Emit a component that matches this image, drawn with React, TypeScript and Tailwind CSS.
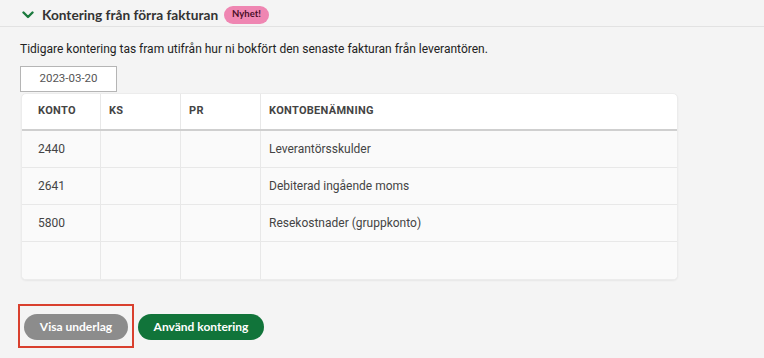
import React from "react";

const rows = [
  { konto: "2440", namn: "Leverantörsskulder" },
  { konto: "2641", namn: "Debiterad ingående moms" },
  { konto: "5800", namn: "Resekostnader (gruppkonto)" },
  { konto: "", namn: "" },
];

export default function App() {
  return (
    <div className="w-[764px] h-[358px] bg-[#f4f4f4] overflow-hidden" style={{ fontFamily: "Roboto, 'Liberation Sans', sans-serif" }}>
      <div className="pl-[20px] border-b border-[#e2e2e2] h-[27px] flex items-center">
        <div className="flex items-center gap-[8px] pt-[3px]">
          <svg width="12" height="8" viewBox="0 0 12 8" className="ml-[2px]">
            <path d="M1.5 1.5 L6 6 L10.5 1.5" fill="none" stroke="#1b7a3e" strokeWidth="2.4" strokeLinecap="round" strokeLinejoin="round" />
          </svg>
          <span className="text-[13.7px] font-bold text-[#333] leading-none" style={{ fontFamily: "Lato, sans-serif" }}>Kontering från förra fakturan</span>
          <span className="ml-[-2px] bg-[#ef86b2] text-[#4a0f28] text-[9.5px] font-bold rounded-full px-[8px] h-[18px] flex items-center" style={{ fontFamily: "Lato, sans-serif" }}>Nyhet!</span>
        </div>
      </div>
      <div className="px-[20px]">
        <p className="mt-[15px] text-[12px] text-[#222] leading-[14px]">Tidigare kontering tas fram utifrån hur ni bokfört den senaste fakturan från leverantören.</p>
        <div className="mt-[10px] w-[97px] h-[26px] bg-white border border-[#b5b5b5] flex items-center justify-center text-[11.5px] text-[#555]">2023-03-20</div>
        <div className="mt-[1px] ml-[1px] w-[657px] bg-white rounded-[5px] border border-[#ececec] shadow-[0_1px_2px_rgba(0,0,0,0.06)] overflow-hidden">
          <div className="flex h-[37px] items-center border-b-2 border-[#cfcfcf] text-[11px] font-bold text-[#444] tracking-[0.3px]">
            <div className="w-[79px] pl-[16px] h-full flex items-center border-r border-[#e8e8e8]">KONTO</div>
            <div className="w-[80px] pl-[8px] h-full flex items-center border-r border-[#e8e8e8]">KS</div>
            <div className="w-[80px] pl-[8px] h-full flex items-center border-r border-[#e8e8e8]">PR</div>
            <div className="flex-1 pl-[8px] h-full flex items-center">KONTOBENÄMNING</div>
          </div>
          {rows.map((r, i) => (
            <div key={i} className={`flex h-[37px] items-center bg-[#fafafa] text-[12px] text-[#444] ${i < rows.length - 1 ? "border-b border-[#e8e8e8]" : ""}`}>
              <div className="w-[79px] pl-[16px] h-full flex items-center border-r border-[#e8e8e8]">{r.konto}</div>
              <div className="w-[80px] h-full border-r border-[#e8e8e8]"></div>
              <div className="w-[80px] h-full border-r border-[#e8e8e8]"></div>
              <div className="flex-1 pl-[8px] h-full flex items-center">{r.namn}</div>
            </div>
          ))}
        </div>
        <div className="mt-[24px] flex items-center gap-[4px]" style={{ fontFamily: "Lato, sans-serif" }}>
          <div className="ml-[-2px] w-[116px] h-[44px] border-2 border-[#d9402e] flex items-center justify-center">
            <button className="w-[104px] h-[26px] mt-[2px] rounded-full bg-[#8c8c8c] text-white text-[12px] font-bold">Visa underlag</button>
          </div>
          <button className="w-[126px] h-[26px] mt-[2px] rounded-full bg-[#11743a] text-white text-[12px] font-bold">Använd kontering</button>
        </div>
      </div>
    </div>
  );
}
